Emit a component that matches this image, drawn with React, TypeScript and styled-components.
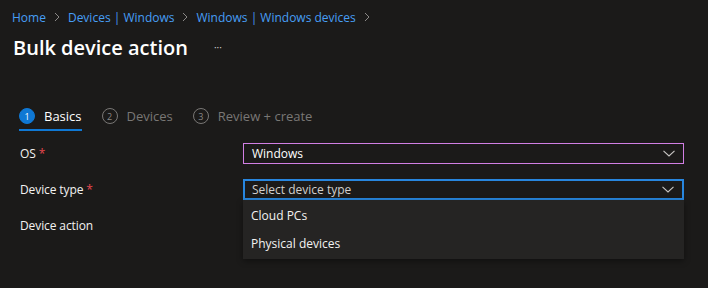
import styled, { createGlobalStyle } from "styled-components"

const Global = createGlobalStyle`
  body {
    margin: 0;
    background: #1b1a19;
    font-family: "Segoe UI", "Open Sans", sans-serif;
    color: #ffffff;
  }
`

const Chevron = () => (
  <svg width="12" height="7" viewBox="0 0 12 7" fill="none">
    <path d="M0.5 0.8 L6 6 L11.5 0.8" stroke="#c8c6c4" strokeWidth="1.1" />
  </svg>
)

const Sep = () => (
  <svg width="6" height="10" viewBox="0 0 6 10" fill="none">
    <path d="M1 1 L5 5 L1 9" stroke="#8a8886" strokeWidth="1" />
  </svg>
)

const App = () => {
  return (
    <Page>
      <Global />
      <Crumbs>
        <Link>Home</Link>
        <Sep />
        <Link>Devices | Windows</Link>
        <Sep />
        <Link>Windows | Windows devices</Link>
        <Sep />
      </Crumbs>
      <TitleRow>
        <Title>Bulk device action</Title>
        <More>···</More>
      </TitleRow>
      <Steps>
        <Step active>
          <Num active>1</Num>
          <StepLabel active>Basics</StepLabel>
        </Step>
        <Step>
          <Num>2</Num>
          <StepLabel>Devices</StepLabel>
        </Step>
        <Step>
          <Num>3</Num>
          <StepLabel>Review + create</StepLabel>
        </Step>
      </Steps>
      <Form>
        <Row>
          <Label>OS <Req>*</Req></Label>
          <Select tone="pink">
            <span>Windows</span>
            <Chevron />
          </Select>
        </Row>
        <Row>
          <Label>Device type <Req>*</Req></Label>
          <Field>
            <Select tone="blue">
              <span>Select device type</span>
              <Chevron />
            </Select>
            <Menu>
              <Option>Cloud PCs</Option>
              <Option>Physical devices</Option>
            </Menu>
          </Field>
        </Row>
        <Row>
          <Label>Device action</Label>
        </Row>
      </Form>
    </Page>
  )
}

export default App

const Page = styled.div`
  width: 708px;
  height: 288px;
  box-sizing: border-box;
  padding: 8px 0 0 12px;
  overflow: hidden;
`
const Crumbs = styled.div`
  display: flex;
  align-items: center;
  gap: 8px;
  height: 18px;
  font-size: 12px;
`
const Link = styled.span`
  color: #479ef5;
`
const TitleRow = styled.div`
  display: flex;
  align-items: center;
  gap: 26px;
  margin-top: 8px;
  padding-left: 1px;
`
const Title = styled.div`
  font-size: 20px;
  font-weight: 600;
  line-height: 28px;
`
const More = styled.div`
  font-size: 10px;
  color: #d2d0ce;
  margin-top: -2px;
`
const Steps = styled.div`
  display: flex;
  gap: 20px;
  margin-top: 42px;
  padding-left: 7px;
`
const Step = styled.div<{ active?: boolean }>`
  display: flex;
  align-items: center;
  gap: 9px;
  height: 24px;
  border-bottom: 2px solid ${p => (p.active ? "#0f78d4" : "transparent")};
  padding-bottom: 1px;
`
const Num = styled.div<{ active?: boolean }>`
  width: 16px;
  height: 16px;
  box-sizing: border-box;
  border-radius: 50%;
  display: flex;
  align-items: center;
  justify-content: center;
  font-size: 9px;
  background: ${p => (p.active ? "#0f78d4" : "transparent")};
  border: 1px solid ${p => (p.active ? "#0f78d4" : "#797775")};
  color: ${p => (p.active ? "#ffffff" : "#8a8886")};
`
const StepLabel = styled.div<{ active?: boolean }>`
  font-size: 13px;
  color: ${p => (p.active ? "#ffffff" : "#797775")};
`
const Form = styled.div`
  display: flex;
  flex-direction: column;
  gap: 15px;
  margin-top: 12px;
  padding-left: 8px;
`
const Row = styled.div`
  display: grid;
  grid-template-columns: 223px 441px;
  align-items: start;
  min-height: 21px;
`
const Label = styled.div`
  font-size: 12px;
  line-height: 21px;
  letter-spacing: -0.1px;
  color: #f3f2f1;
`
const Req = styled.span`
  color: #e8474e;
`
const Field = styled.div`
  position: relative;
`
const Select = styled.div<{ tone: "pink" | "blue" }>`
  height: 21px;
  box-sizing: border-box;
  display: flex;
  align-items: center;
  justify-content: space-between;
  padding: 0 8px;
  font-size: 12px;
  background: #1b1a19;
  border: ${p => (p.tone === "blue" ? "2px solid #2886de" : "1px solid #d17fe4")};
  color: ${p => (p.tone === "blue" ? "#d2d0ce" : "#ffffff")};
  padding-left: ${p => (p.tone === "blue" ? "7px" : "8px")};
`
const Menu = styled.div`
  position: absolute;
  left: 0;
  right: 0;
  top: 21px;
  background: #252423;
  padding: 1px 0 2px;
  box-shadow: 0 2px 6px rgba(0, 0, 0, 0.4);
`
const Option = styled.div`
  height: 28px;
  display: flex;
  align-items: center;
  padding-left: 8px;
  font-size: 12px;
  color: #f3f2f1;
`
